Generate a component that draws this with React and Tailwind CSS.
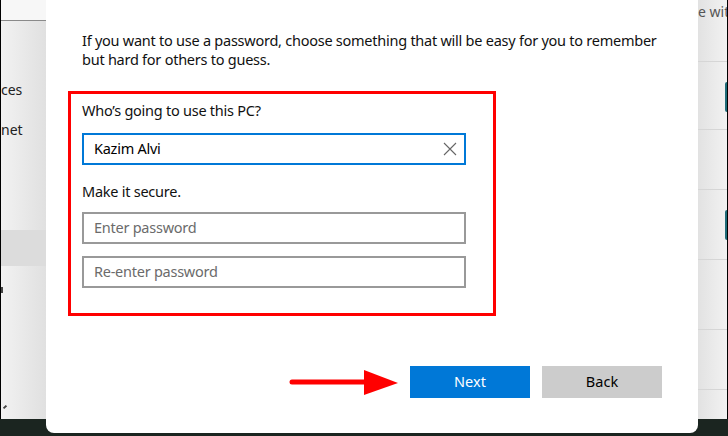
const font = { fontFamily: '"Noto Sans", "Open Sans", sans-serif' }

function LeftPanel() {
  return (
    <div className="flex w-[46px] shrink-0 flex-col">
      <div className="flex h-[419px] flex-col border-l border-black bg-gradient-to-r from-[#f2f2f2] to-[#e0e0e0] text-[14px] leading-[20px] text-[#222]">
        <div className="h-[21px] border-b border-[#8a8a8a] bg-[#f7f7f7]"></div>
        <div className="mt-[59px] whitespace-nowrap">ces</div>
        <div className="mt-[20px] whitespace-nowrap">net</div>
        <div className="mt-[90px] h-[36px] bg-[#dcdcdc]"></div>
        <div className="mt-[21px] h-[6px] w-[2px] bg-[#444]"></div>
        <div className="mt-[112px] ml-[3px] h-[4px] w-[2px] rotate-45 bg-[#444]"></div>
      </div>
    </div>
  )
}

function RightPanel() {
  const rows = [68, 60, 70, 70, 60]
  return (
    <div className="flex w-[30px] shrink-0 flex-col">
      <div className="flex h-[419px] overflow-hidden">
        <div className="flex w-[29px] flex-col bg-gradient-to-r from-[#e2e2e2] to-[#f2f2f2] text-[14px] text-[#555]">
          <div className="h-[62px] overflow-hidden whitespace-nowrap border-b border-[#d6d6d6] pt-[1px]">e wit</div>
          {rows.map((h, i) => (
            <div key={i} className="relative border-b border-[#d6d6d6]" style={{ height: h }}>
              {(i === 0 || i === 2) && (
                <div className="absolute right-0 top-[20px] h-[30px] w-[2px] rounded-l-[2px] bg-[#1f6b78]"></div>
              )}
            </div>
          ))}
        </div>
        <div className="w-[1px] bg-black"></div>
      </div>
    </div>
  )
}

function ClearIcon() {
  return (
    <svg width="14" height="14" viewBox="0 0 14 14">
      <path d="M1 1 L13 13 M13 1 L1 13" stroke="#666" strokeWidth="1.1" fill="none" />
    </svg>
  )
}

function Field({ placeholder, value, active }) {
  return (
    <div
      className={
        active
          ? "flex h-[32px] w-[384px] items-center border-2 border-[#0078d7] pl-[10px] pr-[7px] text-[14.5px] tracking-[-0.25px] text-black"
          : "flex h-[32px] w-[384px] items-center border-2 border-[#999999] pl-[10px] pr-[7px] text-[14.5px] tracking-[-0.25px] text-[#6b6b6b]"
      }
    >
      <span className="flex-1">{value || placeholder}</span>
      {active && <ClearIcon />}
    </div>
  )
}

export default function App() {
  return (
    <div className="flex h-[436px] w-[728px] overflow-hidden bg-[#1b2520]" style={font}>
      <LeftPanel />
      <div className="flex h-[433px] w-[652px] shrink-0 flex-col rounded-b-[8px] bg-white">
        <p className="ml-[36px] mt-[31px] whitespace-nowrap text-[14.5px] leading-[19px] tracking-[-0.25px] text-[#111]">
          If you want to use a password, choose something that will be easy for you to remember
          <br />
          but hard for others to guess.
        </p>
        <div className="ml-[22px] mt-[22px] flex h-[225px] w-[428px] flex-col border-[3px] border-[#ff0000] pl-[11px]">
          <div className="mt-[6px] text-[14.5px] tracking-[-0.25px] text-[#111]">Who’s going to use this PC?</div>
          <div className="mt-[11px]">
            <Field value="Kazim Alvi" active />
          </div>
          <div className="mt-[16px] text-[14.5px] tracking-[-0.25px] text-[#111]">Make it secure.</div>
          <div className="mt-[9px]">
            <Field placeholder="Enter password" />
          </div>
          <div className="mt-[12px]">
            <Field placeholder="Re-enter password" />
          </div>
        </div>
        <div className="mt-[50px] flex items-center">
          <svg width="114" height="30" viewBox="0 0 114 30" className="ml-[242px]">
            <line x1="4" y1="15" x2="82" y2="15" stroke="#ff0000" strokeWidth="5" strokeLinecap="round" />
            <polygon points="76,3 110,16 76,28" fill="#ff0000" />
          </svg>
          <button className="ml-[8px] h-[32px] w-[120px] bg-[#0078d7] text-[14.5px] text-white">Next</button>
          <button className="ml-[12px] h-[32px] w-[120px] bg-[#cccccc] text-[14.5px] text-black">Back</button>
        </div>
      </div>
      <RightPanel />
    </div>
  )
}
